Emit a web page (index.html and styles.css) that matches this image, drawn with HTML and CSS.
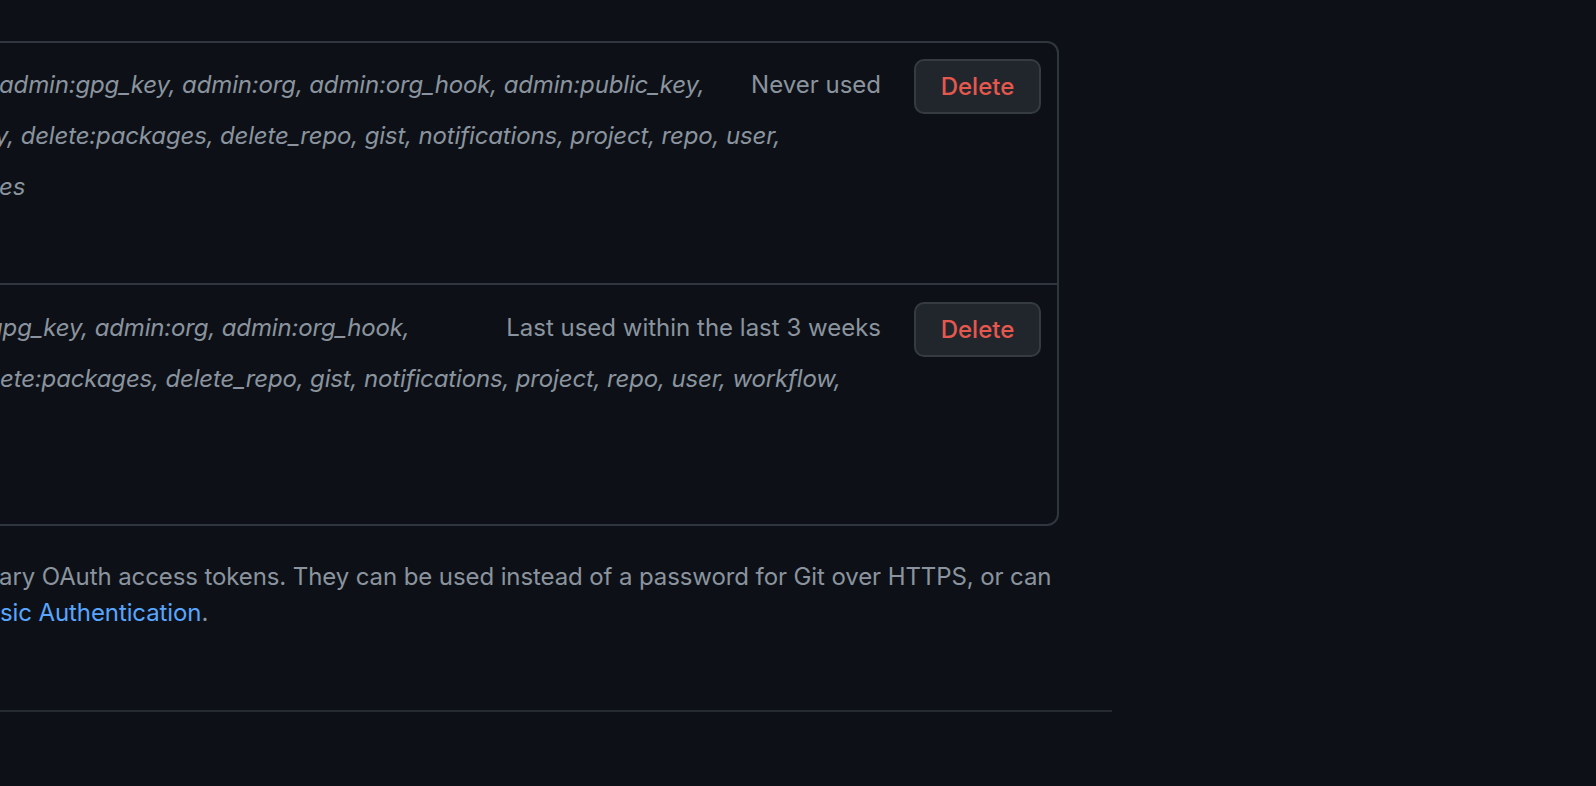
FILE: index.html
```html
<!DOCTYPE html>
<html lang="en">
<head>
<meta charset="utf-8">
<title>Personal access tokens (classic)</title>
<link rel="stylesheet" href="styles.css">
</head>
<body>
<div class="page">
  <div class="tokens">
    <div class="token">
      <div class="scopes">
        <em class="ln cut-a">admin:gpg_key, admin:org, admin:org_hook, admin:public_key,</em>
        <em class="ln cut-y">y, delete:packages, delete_repo, gist, notifications, project, repo, user,</em>
        <em class="ln cut-es">es</em>
      </div>
      <span class="last-used">Never used</span>
      <button class="btn-danger" type="button">Delete</button>
    </div>
    <div class="token">
      <div class="scopes">
        <em class="ln cut-g">gpg_key, admin:org, admin:org_hook,</em>
        <em class="ln cut-ete">ete:packages, delete_repo, gist, notifications, project, repo, user, workflow,</em>
      </div>
      <span class="last-used">Last used within the last 3 weeks</span>
      <button class="btn-danger" type="button">Delete</button>
    </div>
  </div>
  <p class="note"><span class="cut-ary">ary OAuth access tokens. They can be used instead of a password for Git over HTTPS, or can</span><br><span class="cut-sic"><a href="#" class="link">sic Authentication</a>.</span></p>
  <div class="rule"></div>
</div>
</body>
</html>
```

FILE: styles.css
```css
html, body {
  margin: 0;
  padding: 0;
  background: #0d1117;
  overflow: hidden;
}

body {
  font-family: "Inter", "Liberation Sans", sans-serif;
  font-size: 24px;
  color: #8b949e;
}

.page {
  width: 1152px;
  margin-left: -40px;
  padding-top: 41px;
}

.tokens {
  margin-right: 53px;
  border: 2px solid #30363d;
  border-radius: 12px;
}

.token {
  box-sizing: border-box;
  height: 240px;
  display: flex;
  align-items: flex-start;
  padding: 16px 16px 0 40px;
}

.token + .token {
  height: 241px;
  border-top: 2px solid #30363d;
  padding-top: 17px;
}

.scopes {
  flex: 1;
  min-width: 0;
  display: flex;
  flex-direction: column;
  line-height: 51px;
}

.ln {
  display: block;
  white-space: nowrap;
  font-style: italic;
  letter-spacing: -0.15px;
}

.cut-a { margin-left: -3px; }
.cut-y { margin-left: -7px; }
.cut-es { margin-left: -3px; }
.cut-g { margin-left: -14px; }
.cut-ete { margin-left: -2px; }

.last-used {
  line-height: 51px;
  white-space: nowrap;
  margin-right: 33px;
}

.btn-danger {
  box-sizing: border-box;
  width: 127px;
  height: 55px;
  margin: 0;
  padding: 0;
  font-family: inherit;
  font-size: 24px;
  font-weight: 500;
  color: #e5584d;
  background: #21262d;
  border: 2px solid #363b42;
  border-radius: 10px;
  flex-shrink: 0;
}

.note {
  margin: 33px 0 0;
  padding-left: 40px;
  line-height: 36px;
  white-space: nowrap;
  letter-spacing: -0.1px;
}

.cut-ary { margin-left: -1px; }

.link {
  color: #58a6ff;
  text-decoration: none;
}

.rule {
  margin-top: 79px;
  border-top: 2px solid #262b32;
}
```
